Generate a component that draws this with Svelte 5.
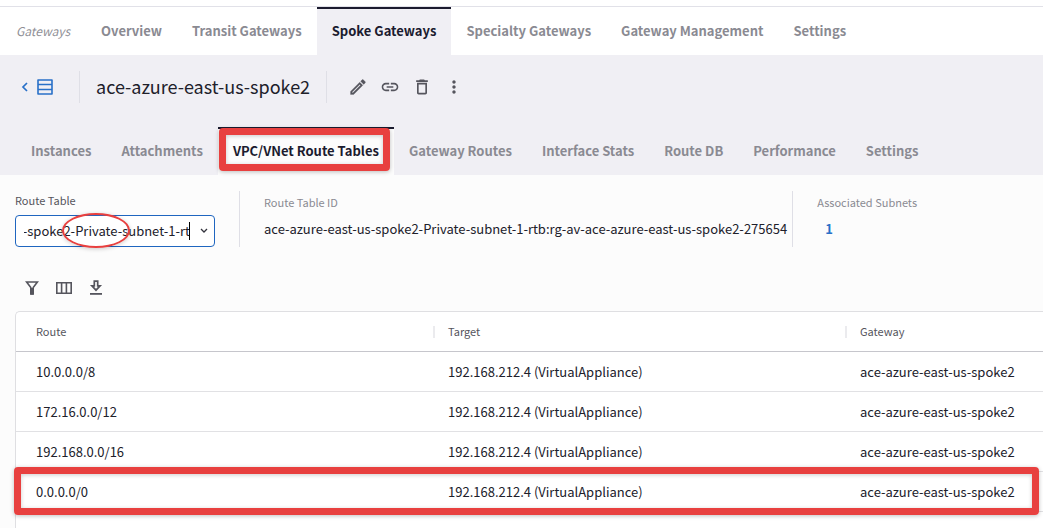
<script>
  import { onMount } from 'svelte';

  const routeTableId =
    'ace-azure-east-us-spoke2-Private-subnet-1-rtb:rg-av-ace-azure-east-us-spoke2-275654';

  const mainTabs = [
    'Overview',
    'Transit Gateways',
    'Spoke Gateways',
    'Specialty Gateways',
    'Gateway Management',
    'Settings'
  ];
  const subTabs = [
    'Instances',
    'Attachments',
    'VPC/VNet Route Tables',
    'Gateway Routes',
    'Interface Stats',
    'Route DB',
    'Performance',
    'Settings'
  ];
  const routes = ['10.0.0.0/8', '172.16.0.0/12', '192.168.0.0/16', '0.0.0.0/0'];
  const target = '192.168.212.4 (VirtualAppliance)';
  const gateway = 'ace-azure-east-us-spoke2';

  let tableValue = $state(routeTableId);
  let tableInput;

  onMount(() => {
    tableInput.scrollLeft = 108;
  });
</script>

<div class="page">
  <nav class="main-nav" aria-label="Gateways">
    <span class="section">Gateways</span>
    {#each mainTabs as tab}
      <a href="#main" class="tab" class:active={tab === 'Spoke Gateways'}>{tab}</a>
    {/each}
  </nav>

  <header class="head">
    <div class="title-row">
      <button class="back" aria-label="Back to list">
        <svg width="8" height="12" viewBox="0 0 8 12"><path d="M6 2 2 6l4 4" fill="none" stroke="currentColor" stroke-width="1.7" /></svg>
        <svg width="16" height="16" viewBox="0 0 16 16"><path d="M1 1h14v14H1zM1 5.5h14M1 10.5h14" fill="none" stroke="currentColor" stroke-width="1.6" stroke-linejoin="round" /></svg>
      </button>
      <h1>{gateway}</h1>
      <div class="actions">
        <button class="icon" aria-label="Edit">
          <svg width="20" height="20" viewBox="0 0 24 24"><path fill="currentColor" stroke="currentColor" stroke-width=".3" d="M14.06 9.02l.92.92L5.92 19H5v-.92l9.06-9.06M17.66 3c-.25 0-.51.1-.7.29l-1.83 1.83 3.75 3.75 1.83-1.83c.39-.39.39-1.02 0-1.41l-2.34-2.34c-.2-.2-.45-.29-.71-.29zm-3.6 3.19L3 17.25V21h3.75L17.81 9.94l-3.75-3.75z" /></svg>
        </button>
        <button class="icon" aria-label="Copy link">
          <svg width="20" height="20" viewBox="0 0 24 24"><path fill="currentColor" d="M3.9 12c0-1.71 1.39-3.1 3.1-3.1h4V7H7c-2.76 0-5 2.24-5 5s2.24 5 5 5h4v-1.9H7c-1.71 0-3.1-1.39-3.1-3.1zM8 13h8v-2H8v2zm9-6h-4v1.9h4c1.71 0 3.1 1.39 3.1 3.1s-1.39 3.1-3.1 3.1h-4V17h4c2.76 0 5-2.24 5-5s-2.24-5-5-5z" /></svg>
        </button>
        <button class="icon" aria-label="Delete">
          <svg width="20" height="20" viewBox="0 0 24 24"><path fill="currentColor" d="M6 19c0 1.1.9 2 2 2h8c1.1 0 2-.9 2-2V7H6v12zM8 9h8v10H8V9zm7.5-5l-1-1h-5l-1 1H5v2h14V4h-3.5z" /></svg>
        </button>
        <button class="icon" aria-label="More">
          <svg width="20" height="20" viewBox="0 0 24 24"><path fill="currentColor" d="M12 8c1.1 0 2-.9 2-2s-.9-2-2-2-2 .9-2 2 .9 2 2 2zm0 2c-1.1 0-2 .9-2 2s.9 2 2 2 2-.9 2-2-.9-2-2-2zm0 6c-1.1 0-2 .9-2 2s.9 2 2 2 2-.9 2-2-.9-2-2-2z" /></svg>
        </button>
      </div>
    </div>
    <nav class="sub-nav" aria-label="Gateway details">
      {#each subTabs as tab}
        <a href="#detail" class="tab" class:active={tab === 'VPC/VNet Route Tables'}>
          {tab}
          {#if tab === 'VPC/VNet Route Tables'}<span class="mark tab-mark"></span>{/if}
        </a>
      {/each}
    </nav>
  </header>

  <section class="summary">
    <div class="picker">
      <label for="route-table">Route Table</label>
      <div class="combo">
        <input id="route-table" type="text" bind:this={tableInput} bind:value={tableValue} />
        <span class="caret"></span>
        <svg width="8" height="6" viewBox="0 0 8 6"><path d="M1 1l3 3 3-3" fill="none" stroke="#33333d" stroke-width="1.3" /></svg>
        <span class="oval"></span>
      </div>
    </div>
    <div class="fact id-fact">
      <span class="name">Route Table ID</span>
      <span class="value">{routeTableId}</span>
    </div>
    <div class="fact">
      <span class="name">Associated Subnets</span>
      <a class="count" href="#subnets">1</a>
    </div>
  </section>

  <div class="tools">
    <button class="icon" aria-label="Filter">
      <svg width="16" height="16" viewBox="0 0 16 16"><path d="M2.6 2h10.8L9.2 7.6V14H6.8V7.6z" fill="none" stroke="currentColor" stroke-width="1.6" /><path d="M6.6 8h2.8v6.6H6.6z" fill="currentColor" /></svg>
    </button>
    <button class="icon" aria-label="Columns">
      <svg width="16" height="16" viewBox="0 0 16 16"><path d="M.8 2.7h14.4v10.6H.8zM5.6 2.7v10.6M10.4 2.7v10.6" fill="none" stroke="currentColor" stroke-width="1.6" /></svg>
    </button>
    <button class="icon" aria-label="Download">
      <svg width="16" height="16" viewBox="0 0 16 16"><path d="M6.3 1.2h3.4v4.6h2.4L8 10.2 3.9 5.8h2.4z" fill="none" stroke="currentColor" stroke-width="1.7" /><path d="M2 13h12v1.8H2z" fill="currentColor" /></svg>
    </button>
  </div>

  <div class="grid">
    <table>
      <thead>
        <tr><th>Route</th><th>Target</th><th>Gateway</th></tr>
      </thead>
      <tbody>
        {#each routes as route}
          <tr>
            <td>{route}{#if route === '0.0.0.0/0'}<span class="mark row-mark"></span>{/if}</td>
            <td>{target}</td>
            <td>{gateway}</td>
          </tr>
        {/each}
      </tbody>
    </table>
  </div>
</div>

<style>
  :global(body) {
    margin: 0;
    background: #fcfcfc;
  }
  .page {
    box-sizing: border-box;
    min-height: 100vh;
    padding-top: 6px;
    overflow: hidden;
    background: #fcfcfc;
    color: #20202a;
    font-family: 'Noto Sans CJK SC', 'Noto Sans', sans-serif;
    font-size: 13px;
    line-height: 20px;
  }
  button {
    border: 0;
    padding: 0;
    background: none;
    font: inherit;
    cursor: pointer;
  }
  svg {
    display: block;
  }
  nav {
    display: flex;
    white-space: nowrap;
  }
  .tab {
    position: relative;
    box-sizing: border-box;
    height: 48px;
    padding: 12px 15px;
    border-top: 2px solid transparent;
    color: #8a8a92;
    font-weight: 700;
    text-decoration: none;
  }
  .tab.active {
    border-top-color: #1b1b2f;
    color: #1b1b2f;
  }
  .main-nav {
    border-top: 1px solid #e1e1e8;
    background: #fff;
    box-shadow: 0 -6px #fff;
  }
  .main-nav .tab.active {
    background: #f0eff4;
  }
  .section {
    padding: 14px 16px;
    color: #8f8f96;
    font-size: 12px;
    font-style: italic;
  }
  .head {
    background: #f0eff4;
  }
  .title-row {
    display: flex;
    align-items: center;
    padding: 16px 21px;
  }
  .back {
    display: flex;
    align-items: center;
    gap: 8px;
    height: 32px;
    padding-right: 26px;
    color: #2870c8;
  }
  h1 {
    margin: 0;
    padding: 0 16px 2px;
    border: solid #dfdfe6;
    border-width: 0 1px;
    font-size: 18px;
    font-weight: 400;
    line-height: 30px;
  }
  .actions {
    display: flex;
    gap: 12px;
    padding-left: 21px;
  }
  .icon {
    color: #55555d;
  }
  .sub-nav {
    padding: 8px 16px 0;
  }
  .sub-nav .tab.active {
    background: #fcfcfc;
  }
  .mark {
    position: absolute;
    box-sizing: border-box;
    border: 7px solid #e8403f;
    border-radius: 4px;
    box-shadow: 0 1px 4px rgba(0, 0, 0, 0.25), inset 0 1px 4px rgba(0, 0, 0, 0.2);
    pointer-events: none;
  }
  .tab-mark {
    inset: -1px 4px 4px 1px;
  }
  .summary {
    display: flex;
    padding: 16px 15px 0;
    white-space: nowrap;
  }
  .picker {
    width: 200px;
    margin-right: 24px;
  }
  .picker label {
    display: block;
    padding-bottom: 6px;
    color: #55555d;
    font-size: 11px;
    line-height: 18px;
  }
  .combo {
    position: relative;
    display: flex;
    align-items: center;
    justify-content: space-between;
    box-sizing: border-box;
    height: 32px;
    padding: 0 6px 0 8px;
    border: 1px solid #1f66c0;
    border-radius: 4px;
    background: #fff;
  }
  input {
    width: 166px;
    padding: 0;
    border: 0;
    outline: 0;
    background: none;
    color: #20202a;
    font: inherit;
  }
  .caret {
    position: absolute;
    top: 6px;
    left: 173px;
    width: 1px;
    height: 18px;
    background: #000;
  }
  .oval {
    position: absolute;
    top: -3px;
    left: 46px;
    box-sizing: border-box;
    width: 68px;
    height: 35px;
    border: 2px solid #e8403f;
    border-radius: 50%;
    box-shadow: 0 1px 4px rgba(0, 0, 0, 0.2);
    pointer-events: none;
  }
  .fact {
    display: flex;
    flex-direction: column;
    gap: 8px;
    box-sizing: border-box;
    height: 56px;
    padding: 2px 24px;
    border-left: 1px solid #dfdfe6;
  }
  .id-fact {
    padding-right: 5px;
  }
  .name {
    color: #8a8a92;
    font-size: 11px;
    line-height: 18px;
  }
  .count {
    padding-left: 8px;
    color: #2870c8;
    font-weight: 700;
    text-decoration: none;
  }
  .tools {
    display: flex;
    gap: 16px;
    padding: 33px 24px 15px;
  }
  .grid {
    min-height: 220px;
    margin-left: 15px;
    border: solid #dfdfe2;
    border-width: 1px 0 0 1px;
    border-top-left-radius: 5px;
    background: #fff;
  }
  table {
    width: calc(100% + 3px);
    border-collapse: separate;
    border-spacing: 0;
    table-layout: fixed;
  }
  tr {
    position: relative;
  }
  th,
  td {
    box-sizing: border-box;
    height: 40px;
    padding: 0 20px;
    border-bottom: 1px solid #e1e1e4;
    text-align: left;
    white-space: nowrap;
  }
  th {
    position: relative;
    width: 40%;
    padding-bottom: 2px;
    border-bottom-color: #c6c6cc;
    color: #55555d;
    font-size: 11px;
    font-weight: 400;
    line-height: 18px;
  }
  th:last-child {
    width: 20%;
  }
  th + th::before {
    content: '';
    position: absolute;
    top: 14px;
    left: 5px;
    width: 2px;
    height: 12px;
    background: #ebebee;
  }
  .row-mark {
    inset: -5px 7px -3px -2px;
  }
</style>
